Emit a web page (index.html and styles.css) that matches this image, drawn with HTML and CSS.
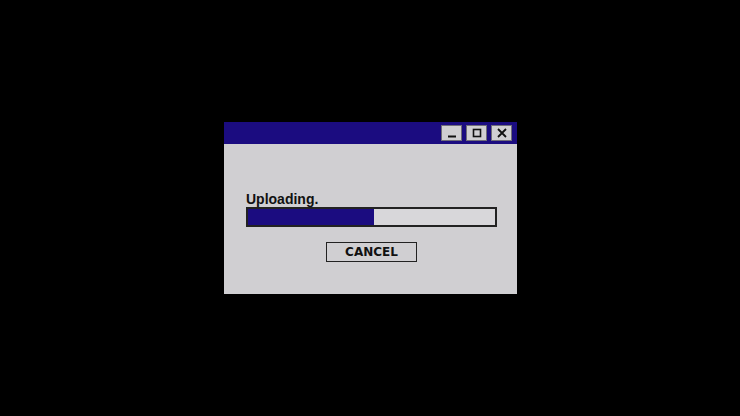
FILE: index.html
```html
<!DOCTYPE html>
<html>
<head>
  <title>Uploading</title>
  <link rel="stylesheet" href="styles.css">
</head>
<body>
  <div class="window">
    <div class="titlebar">
      <button class="ctl" title="Minimize">
        <svg width="10" height="10" viewBox="0 0 10 10"><path d="M1 8.5h8" stroke="#111" stroke-width="2"/></svg>
      </button>
      <button class="ctl" title="Maximize">
        <svg width="10" height="10" viewBox="0 0 10 10"><rect x="1.5" y="1.5" width="7" height="7" fill="none" stroke="#111" stroke-width="1.6"/></svg>
      </button>
      <button class="ctl" title="Close">
        <svg width="10" height="10" viewBox="0 0 10 10"><path d="M1 1l8 8M9 1l-8 8" stroke="#111" stroke-width="1.8"/></svg>
      </button>
    </div>
    <div class="content">
      <div class="label">Uploading.</div>
      <div class="progress">
        <div class="fill" style="width: 51%"></div>
      </div>
      <div class="actions">
        <button class="cancel">CANCEL</button>
      </div>
    </div>
  </div>
</body>
</html>
```

FILE: styles.css
```css
/* old-school upload dialog on a black screen */
body {
  margin: 0;
  width: 740px;
  height: 416px;
  background-color: #000;
  font-family: "DejaVu Sans", sans-serif;
}

.window {
  width: 293px;
  margin: 122px 0 0 224px;
  background-color: #d0cfd2;
}

.titlebar {
  height: 22px;
  background-color: #1b0c80;
  display: flex;
  justify-content: flex-end;
  align-items: center;
  gap: 4px;
  padding: 0 5px;
}

.ctl {
  width: 21px;
  height: 16px;
  padding: 0;
  margin: 0;
  background-color: #d0cfd2;
  border: 1px solid #6f6d78;
  display: flex;
  align-items: center;
  justify-content: center;
}

.content {
  height: 150px;
  padding: 47px 20px 0 22px;
  box-sizing: border-box;
}

.label {
  font-family: "Liberation Sans", sans-serif;
  font-size: 14px;
  font-weight: bold;
  color: #111;
  line-height: 16px;
}

.progress {
  width: 251px;
  height: 20px;
  box-sizing: border-box;
  border: 2px solid #222;
  background-color: #d8d7da;
}

.fill {
  height: 100%;
  background-color: #1b0c80;
}

.actions {
  width: 251px;
  display: flex;
  justify-content: center;
  padding-top: 15px;
}

.cancel {
  width: 91px;
  height: 20px;
  padding: 0;
  background-color: #d0cfd2;
  border: 1px solid #222;
  font-family: "DejaVu Sans", sans-serif;
  font-weight: bold;
  font-size: 12px;
  color: #111;
}
```
